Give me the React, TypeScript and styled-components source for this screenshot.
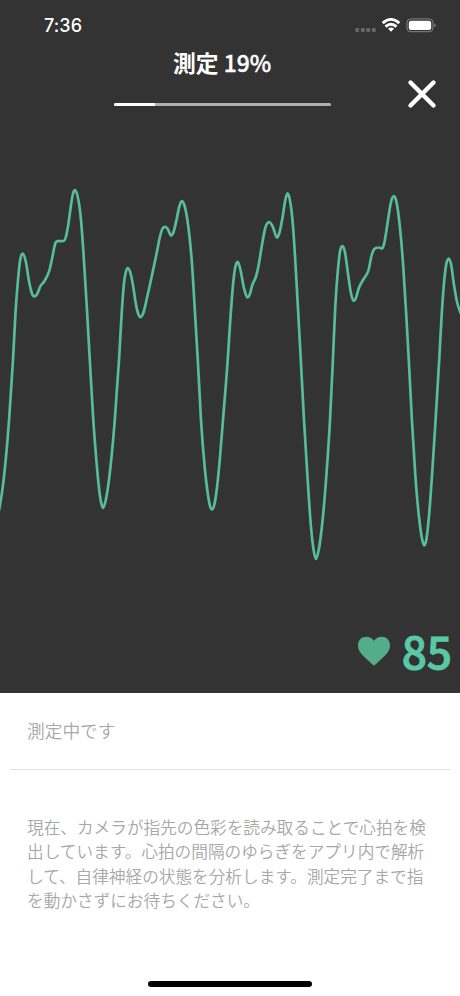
import React from "react";
import styled, { createGlobalStyle } from "styled-components";

const GlobalStyle = createGlobalStyle`
  * { box-sizing: border-box; }
  body { margin: 0; background: #fff; }
`;

const Screen = styled.main`
  width: 460px;
  height: 996px;
  display: flex;
  flex-direction: column;
  overflow: hidden;
  background: #fff;
  font-family: "Noto Sans CJK JP", sans-serif;
`;

const Monitor = styled.section`
  height: 693px;
  flex: none;
  display: flex;
  flex-direction: column;
  background: #333;
  color: #fff;
`;

const StatusBar = styled.div`
  height: 46px;
  flex: none;
  display: flex;
  justify-content: space-between;
  padding: 15px 24px 0 44px;
`;

const Clock = styled.time`
  font: 500 18px/22px Inter, sans-serif;
  letter-spacing: 0.1px;
`;

const StatusIcons = styled.div`
  height: 20px;
  display: flex;
  align-items: center;
`;

const Header = styled.header`
  height: 74px;
  flex: none;
  display: grid;
  grid-template-columns: 113.5px 217px 1fr;
`;

const Progress = styled.div`
  grid-column: 2;
  display: flex;
  flex-direction: column;
  align-items: center;
`;

const Title = styled.h1`
  margin: 0;
  height: 57px;
  font-size: 22.8px;
  line-height: 34px;
  font-weight: 500;
  white-space: nowrap;
  -webkit-text-stroke: 0.4px currentColor;
`;

const TitleLabel = styled.span`
  font-weight: 700;
  -webkit-text-stroke: 0;
`;

const Track = styled.div`
  width: 217px;
  height: 3px;
  border-radius: 2px;
  background: #b0b0b0;
  overflow: hidden;
`;

const Fill = styled.div`
  height: 100%;
  background: #fff;
`;

const CloseButton = styled.button`
  width: 30px;
  height: 30px;
  margin: 33px 23px 0 auto;
  padding: 0;
  border: 0;
  background: none;
  color: #fff;
`;

const Chart = styled.svg`
  display: block;
  width: 460px;
  height: 500px;
  flex: none;
`;

const HeartRate = styled.div`
  height: 61px;
  display: flex;
  align-items: center;
  justify-content: flex-end;
  padding-right: 8px;
  gap: 11px;
  color: #57c9a5;
`;

const Rate = styled.span`
  font-size: 44.2px;
  line-height: 61px;
  font-weight: 500;
  -webkit-text-stroke: 1px currentColor;
`;

const Details = styled.section`
  flex: 1;
  display: flex;
  flex-direction: column;
  color: #a7a7a7;
`;

const State = styled.p`
  margin: 0 10px;
  height: 77px;
  padding-left: 17px;
  border-bottom: 1px solid #e2e2e2;
  font-size: 17.7px;
  line-height: 75px;
  font-weight: 350;
`;

const Explanation = styled.p`
  margin: 44.5px 0 0 27px;
  font-size: 16.65px;
  line-height: 24.6px;
  font-weight: 350;
  white-space: nowrap;
`;

const Line = styled.span`
  display: block;
`;

const HomeIndicator = styled.div`
  width: 164px;
  height: 5.5px;
  margin: auto auto 9.5px 148px;
  border-radius: 3px;
  background: #000;
`;

type Point = [number, number];

const pulse: Point[] = [
  [-2, 515], [0, 505], [3, 485], [6, 457], [9, 421], [13, 360], [15.5, 313], [18, 280], [20, 261], [22.6, 253.6],
  [25.7, 261], [29, 281], [31.3, 291.5], [34.3, 296.4], [37.2, 294], [40, 287], [44.5, 281],
  [49.5, 270], [52.8, 255], [54.8, 245], [57.2, 241.2], [63.5, 241], [66, 236.5], [68, 226.5],
  [71.3, 203], [73, 193.5], [75, 190], [77.3, 195], [81, 220], [83.5, 253.5], [86.8, 306.5],
  [89.8, 360], [93.3, 420], [96.6, 463], [99.7, 494], [101, 502], [103, 508], [105.3, 502],
  [108.3, 485], [111.5, 457], [114.8, 420], [119, 360], [121.7, 313], [124, 283], [125.6, 273],
  [128, 268.2], [130.7, 274], [133.3, 287], [135.7, 303], [138.3, 314], [140.5, 317.2],
  [143.3, 313], [147.3, 296.5], [151.7, 276.5], [156.7, 253], [160, 236.5], [162.3, 229],
  [165, 226.9], [167.5, 228.7], [171.3, 235.7], [173, 233.5], [176.5, 220], [179.3, 206.5],
  [181.8, 201], [184.3, 205], [188.3, 226.5], [191.7, 260], [195, 313], [197.8, 360],
  [201, 420], [204.5, 465], [208.3, 497], [210, 506], [212, 509.6], [214, 506], [217.3, 485],
  [220, 457], [223, 420], [227.7, 360], [230.5, 317], [233.3, 282], [235.3, 267], [237.7, 261.8],
  [240, 268], [244, 288], [247.5, 297.5], [249.7, 294.5], [252.3, 285], [256, 276.5],
  [258.7, 265], [261.7, 246.5], [265.3, 228], [269, 222.2], [272.7, 226.5], [277, 237.7],
  [279.3, 233], [282.7, 216.5], [285.3, 200], [287.5, 193.4], [289.7, 199], [293, 226],
  [296, 273], [299, 327], [300.8, 360], [304, 420], [307.3, 474], [311, 527], [313.3, 548],
  [316, 559], [318.7, 550], [322.7, 519], [326.7, 471], [330, 420], [332.9, 360],
  [335.3, 306], [338, 269], [340, 251.5], [342.5, 246.2], [345, 252.5], [347.7, 271.5],
  [351, 293.5], [353.7, 301], [355.7, 298.5], [358.7, 288.5], [363.3, 279.5], [368.7, 269.5],
  [371.7, 255], [374.3, 249], [378.7, 247.5], [382.3, 248.5], [384.3, 243], [387.7, 222],
  [391, 202], [393.8, 196.2], [396.5, 202], [400, 228], [403.3, 267], [406.7, 323], [408.8, 360],
  [411.9, 420], [415.3, 475], [419, 517], [422.3, 540], [424.2, 545.3], [426.3, 540],
  [429, 516], [432.3, 471], [435.6, 420], [439.2, 360], [441.8, 313], [444, 283],
  [446.3, 264], [448.8, 258.5], [451.2, 265], [454, 285], [457.3, 303], [460, 311.5], [462, 316],
];

// Monotone cubic interpolation keeps each sampled peak and trough in place.
function smoothPath(points: Point[]): string {
  const slopes = points.slice(1).map(([x, y], i) => (y - points[i][1]) / (x - points[i][0]));
  const tangents = points.map((_, i) => {
    if (i === 0) return slopes[0];
    if (i === points.length - 1) return slopes[i - 1];
    const a = slopes[i - 1];
    const b = slopes[i];
    if (a * b <= 0) return 0;
    const before = points[i][0] - points[i - 1][0];
    const after = points[i + 1][0] - points[i][0];
    const mean = (a * after + b * before) / (before + after);
    const limit = 3 * Math.min(Math.abs(a), Math.abs(b));
    return Math.sign(mean) * Math.min(Math.abs(mean), limit);
  });
  let path = `M${points[0][0]} ${points[0][1]}`;
  for (let i = 1; i < points.length; i++) {
    const [x0, y0] = points[i - 1];
    const [x1, y1] = points[i];
    const step = (x1 - x0) / 3;
    path += `C${x0 + step} ${y0 + tangents[i - 1] * step} ${x1 - step} ${y1 - tangents[i] * step} ${x1} ${y1}`;
  }
  return path;
}

const explanation = [
  "現在、カメラが指先の色彩を読み取ることで心拍を検",
  "出しています。心拍の間隔のゆらぎをアプリ内で解析",
  "して、自律神経の状態を分析します。測定完了まで指",
  "を動かさずにお待ちください。",
];

const percent = 19;

export default function App() {
  return (
    <>
      <GlobalStyle />
      <Screen>
        <Monitor>
          <StatusBar>
            <Clock>7:36</Clock>
            <StatusIcons>
              <svg width="82" height="20" viewBox="0 0 82 20">
                <g fill="#666">
                  <rect x="1.2" y="13" width="4" height="4" rx="1" />
                  <rect x="6.8" y="13" width="4" height="4" rx="1" />
                  <rect x="12.2" y="13" width="4" height="4" rx="1" />
                  <rect x="17.8" y="13" width="4" height="4" rx="1" />
                </g>
                <g fill="none" stroke="#fff" strokeWidth="2.8">
                  <path d="M28.7 8.1Q37 .7 45.3 8.1" />
                  <path d="M31.5 11.6Q37 6.9 42.5 11.6" />
                </g>
                <path d="M34 13.7Q37 11.2 40 13.7L37 16.8Z" fill="#fff" />
                <rect x="53" y="3.9" width="26" height="12.8" rx="3.8" fill="none" stroke="#858585" />
                <rect x="54.8" y="5.7" width="22.4" height="9.2" rx="2.2" fill="#fff" />
                <path d="M80.4 8.2Q83 10.3 80.4 12.4Z" fill="#858585" />
              </svg>
            </StatusIcons>
          </StatusBar>
          <Header>
            <Progress>
              <Title>
                <TitleLabel>測定</TitleLabel> {percent}%
              </Title>
              <Track>
                <Fill style={{ width: `${percent}%` }} />
              </Track>
            </Progress>
            <CloseButton aria-label="閉じる">
              <svg width="30" height="30" viewBox="0 0 30 30">
                <path d="M3.5 3.5L26.5 26.5M26.5 3.5L3.5 26.5" fill="none" stroke="currentColor" strokeWidth="4.4" strokeLinecap="round" />
              </svg>
            </CloseButton>
          </Header>
          <Chart viewBox="0 120 460 500">
            <path d={smoothPath(pulse)} fill="none" stroke="#56bc99" strokeWidth="2.7" strokeLinejoin="round" />
          </Chart>
          <HeartRate>
            <svg width="34" height="32" viewBox="0 0 34 32">
              <path d="M17 30.5C15.5 29.8 14 28 11.8 26C5.5 20.5 1 16.5 1 10.5C1 5.2 4.7 1.8 9.3 1.8C12.3 1.8 15.2 3.2 17 5.7C18.8 3.2 21.7 1.8 24.7 1.8C29.3 1.8 33 5.2 33 10.5C33 16.5 28.5 20.5 22.2 26C20 28 18.5 29.8 17 30.5Z" fill="#53ad8c" />
            </svg>
            <Rate>85</Rate>
          </HeartRate>
        </Monitor>
        <Details>
          <State>測定中です</State>
          <Explanation>
            {explanation.map((line) => (
              <Line key={line}>{line}</Line>
            ))}
          </Explanation>
          <HomeIndicator />
        </Details>
      </Screen>
    </>
  );
}
